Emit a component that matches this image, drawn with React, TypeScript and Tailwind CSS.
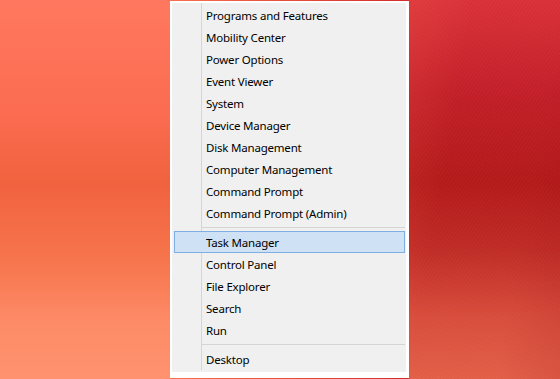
const groups: string[][] = [
  [
    "Programs and Features",
    "Mobility Center",
    "Power Options",
    "Event Viewer",
    "System",
    "Device Manager",
    "Disk Management",
    "Computer Management",
    "Command Prompt",
    "Command Prompt (Admin)",
  ],
  ["Task Manager", "Control Panel", "File Explorer", "Search", "Run"],
  ["Desktop"],
];

const selected = "Task Manager";

const MenuItem = ({ label }: { label: string }) => {
  const active = label === selected;
  return (
    <div
      className={
        active
          ? "relative ml-[2px] mr-[1px] flex h-[22px] items-center border border-[#7eaee4] bg-[#cfe1f4] pl-[31px]"
          : "relative ml-[2px] mr-[1px] flex h-[22px] items-center border border-transparent pl-[31px]"
      }
    >
      <span className="whitespace-nowrap pt-[1px] text-[11.5px] leading-none tracking-[-0.2px] text-black">
        {label}
      </span>
    </div>
  );
};

const Separator = () => (
  <div className="flex h-[7px] items-start pl-[29px] pr-[1px] pt-[3px]">
    <div className="h-[1px] w-full bg-[#d5d5d5]" />
  </div>
);

export default function App() {
  return (
    <div className="flex h-[379px] w-[560px] overflow-hidden font-['Segoe_UI','Noto_Sans',sans-serif]">
      <div className="w-[170px] bg-[linear-gradient(180deg,#ff785f_0%,#fb6c51_30%,#f1623f_48%,#f6744c_68%,#fd8b67_85%,#ff926f_100%)]" />

      <div className="w-[239px] bg-[linear-gradient(90deg,#f6704e,#d22c2c)] pt-[1px]">
        <div className="border-b-[6px] border-l-[2px] border-r-[3px] border-t-[2px] border-white bg-[#f0f0f0]">
          <div className="relative pb-[2px] pt-[1px]">
            <div className="absolute bottom-[2px] left-[29px] top-0 w-[1px] bg-[#d5d5d5]" />
            {groups.map((items, gi) => (
              <div key={gi}>
                {gi > 0 && <Separator />}
                {items.map((label) => (
                  <MenuItem key={label} label={label} />
                ))}
              </div>
            ))}
          </div>
        </div>
      </div>

      <div className="relative flex-1 bg-[linear-gradient(180deg,#d9313a_0%,#c21f28_25%,#b31a1a_48%,#c02c26_66%,#d84d3c_84%,#e25f47_100%)]">
        <div className="absolute inset-0 bg-[repeating-linear-gradient(125deg,rgba(255,255,255,0.025)_0px,rgba(255,255,255,0.025)_1px,transparent_1px,transparent_3px)]" />
        <div className="absolute inset-0 bg-[linear-gradient(100deg,rgba(255,110,80,0.18)_0%,transparent_30%,transparent_70%,rgba(140,10,20,0.12)_100%)]" />
      </div>
    </div>
  );
}
